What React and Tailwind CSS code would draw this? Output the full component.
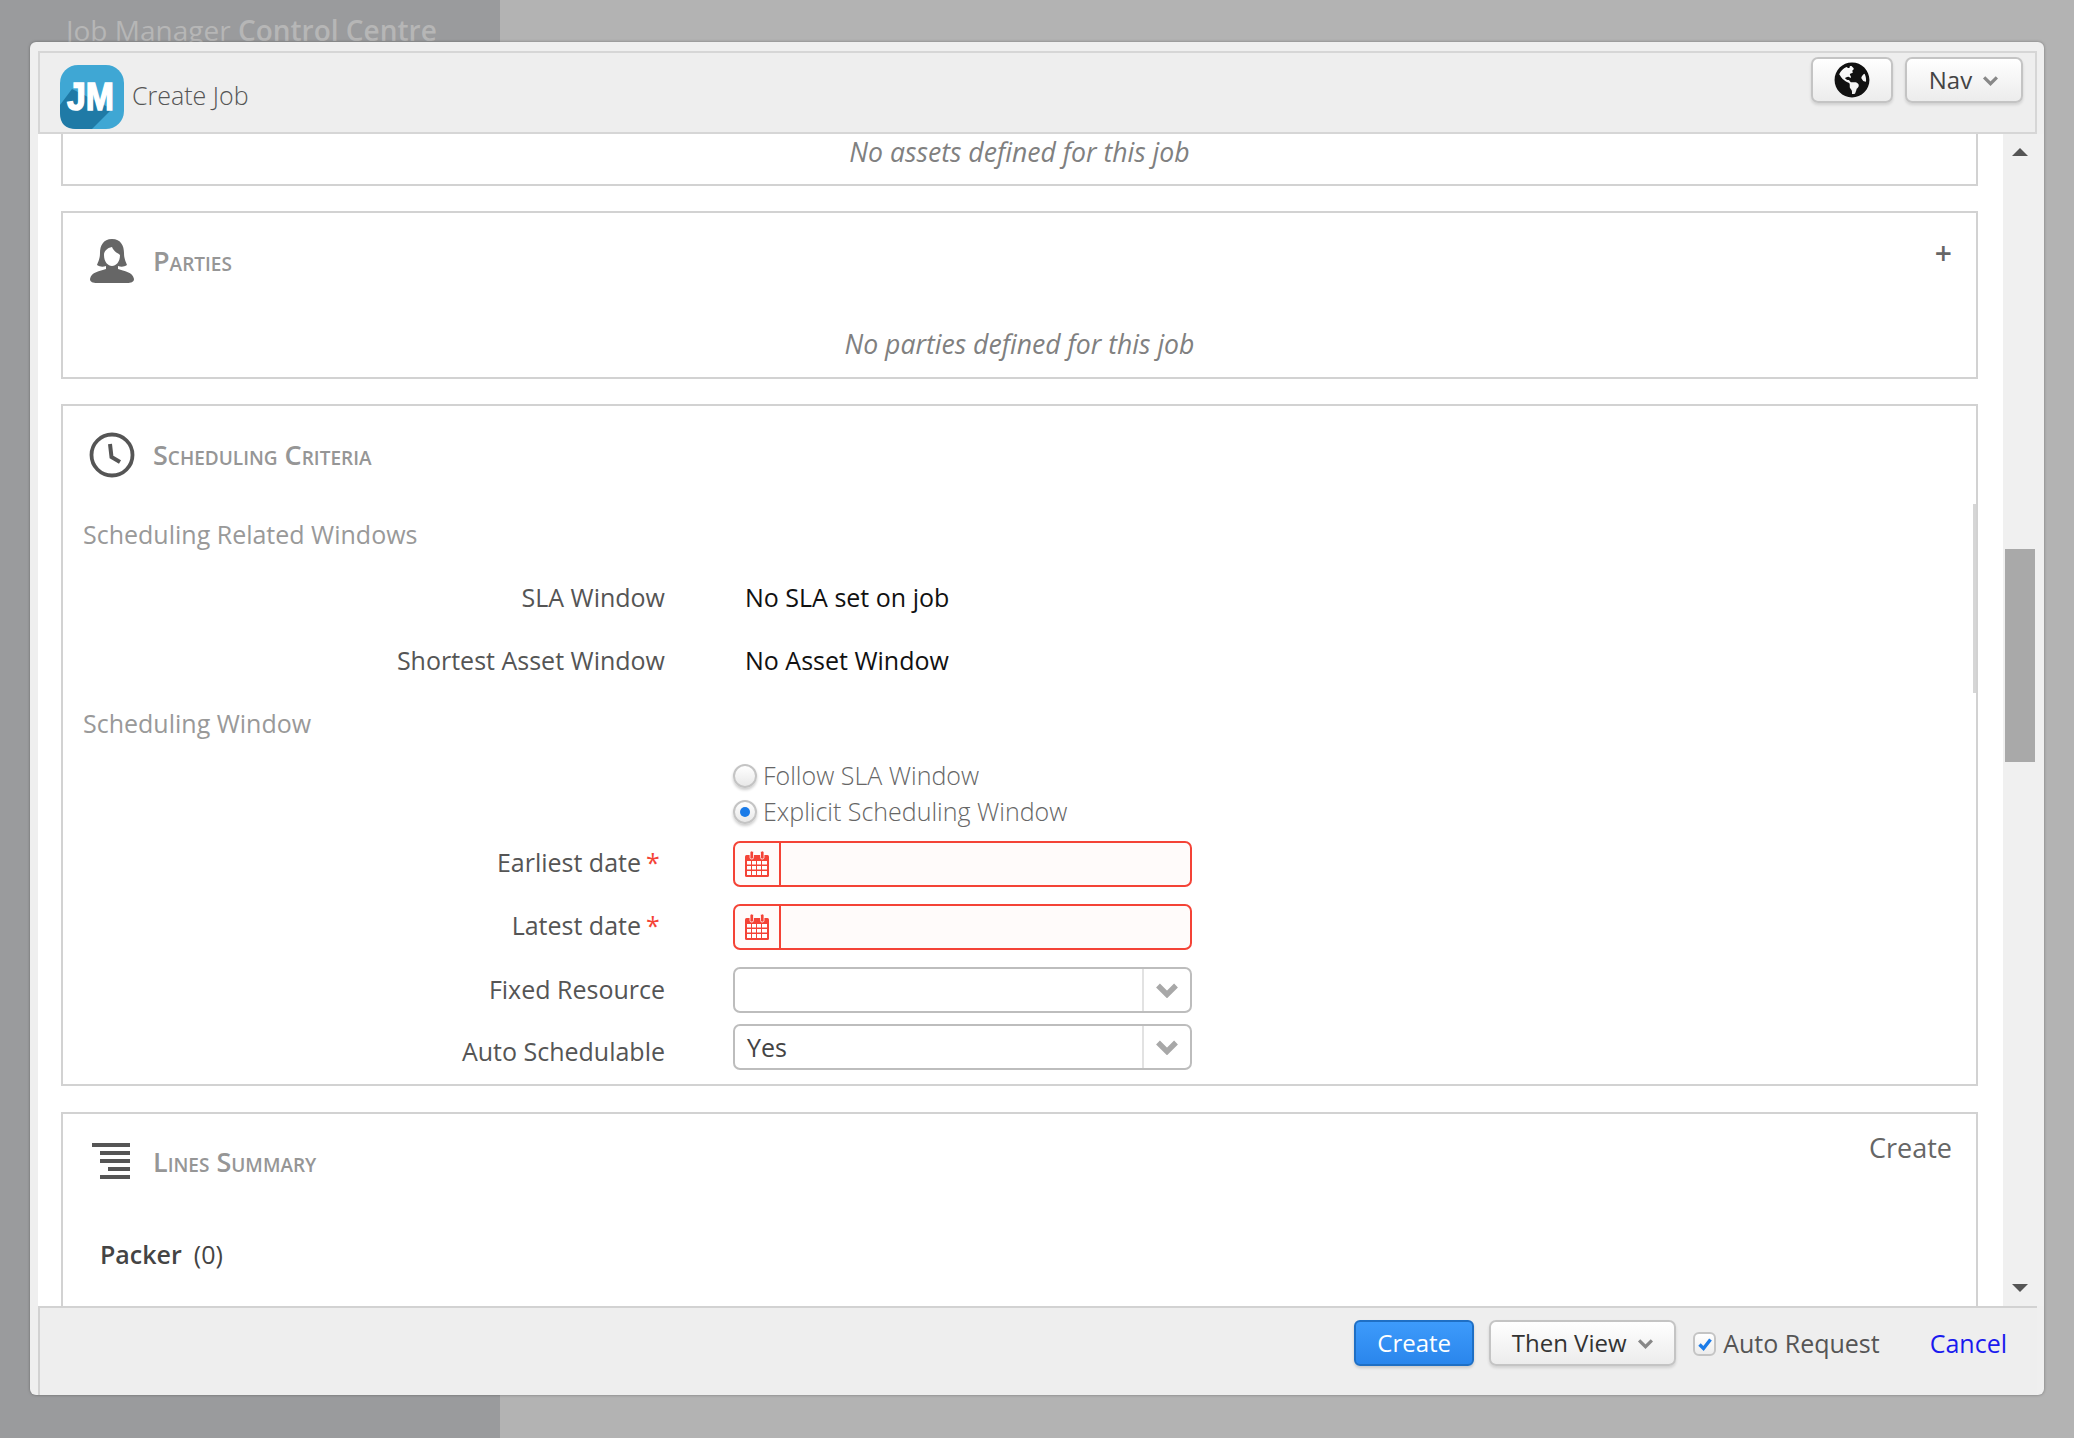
import { FaGlobeAmericas } from 'react-icons/fa';

function Chevron({ className = 'w-4 h-3', color = '#888', weight = 3 }) {
  return (
    <svg viewBox="0 0 16 10" className={className}>
      <path d="M2 2 L8 8 L14 2" fill="none" stroke={color} strokeWidth={weight} />
    </svg>
  );
}

function Logo() {
  return (
    <svg viewBox="0 0 64 64" className="w-[64px] h-[64px] shrink-0">
      <rect width="64" height="64" rx="18" fill="#3fa7d4" />
      <path d="M0 40 L12 24 L52 44 L32 64 L16 64 Q0 64 0 48 Z" fill="#1f7aa6" />
      <text x="7" y="45" textLength="47" lengthAdjust="spacingAndGlyphs" fontFamily="Liberation Sans, sans-serif" fontWeight="700" fontSize="39" stroke="#fff" strokeWidth="1.5" fill="#fff">JM</text>
    </svg>
  );
}

function PersonIcon() {
  return (
    <svg viewBox="0 0 46 46" className="w-[46px] h-[46px]">
      <path d="M23 1 C14 1 11 8 11 15 C11 21 9 24 8 27 C11 29 14 29 17 28 L17 31 C11 33 2 34 1 41 C1 44 4 45 8 45 L38 45 C42 45 45 44 45 41 C44 34 35 33 29 31 L29 28 C32 29 35 29 38 27 C37 24 35 21 35 15 C35 8 32 1 23 1 Z" fill="#666" />
      <path d="M23 9 C18 10 15 13 15 17 C15 24 19 28 23 28 C27 28 31 24 31 17 C29 15 25 14 23 9 Z" fill="#fff" />
    </svg>
  );
}

function ClockIcon() {
  return (
    <svg viewBox="0 0 46 46" className="w-[46px] h-[46px]">
      <circle cx="23" cy="23" r="20.5" fill="none" stroke="#555" strokeWidth="3.8" />
      <path d="M21 12 L22.5 25 L31 30" fill="none" stroke="#555" strokeWidth="4" />
    </svg>
  );
}

function LinesIcon() {
  return (
    <div className="w-[46px] flex flex-col items-end gap-[4px] pr-[5px] -mt-[2px]">
      <div className="w-[38px] h-[4px] bg-[#555]" />
      <div className="w-[30px] h-[4px] bg-[#555]" />
      <div className="w-[30px] h-[4px] bg-[#555]" />
      <div className="w-[22px] h-[4px] bg-[#555]" />
      <div className="w-[30px] h-[4px] bg-[#555]" />
    </div>
  );
}

function CalendarIcon() {
  return (
    <svg viewBox="0 0 24 26" className="w-[24px] h-[26px]">
      <rect x="0" y="4" width="24" height="22" rx="1.5" fill="#f44336" />
      <rect x="5" y="0" width="3.5" height="8" rx="1.5" fill="#f44336" stroke="#fff" strokeWidth="0.8" />
      <rect x="15.5" y="0" width="3.5" height="8" rx="1.5" fill="#f44336" stroke="#fff" strokeWidth="0.8" />
      <g fill="#fff">
        <rect x="2" y="10" width="4" height="3.5" />
        <rect x="7" y="10" width="4" height="3.5" />
        <rect x="12" y="10" width="4" height="3.5" />
        <rect x="17" y="10" width="5" height="3.5" />
        <rect x="2" y="15" width="4" height="3.5" />
        <rect x="7" y="15" width="4" height="3.5" />
        <rect x="12" y="15" width="4" height="3.5" />
        <rect x="17" y="15" width="5" height="3.5" />
        <rect x="2" y="20" width="4" height="4" />
        <rect x="7" y="20" width="4" height="4" />
        <rect x="12" y="20" width="4" height="4" />
        <rect x="17" y="20" width="5" height="4" />
      </g>
    </svg>
  );
}

function PanelHeading({ icon, title }) {
  return (
    <div className="h-[96px] flex items-center pl-[26px]">
      <div className="w-[46px] flex justify-center">{icon}</div>
      <div className="ml-[18px] text-[27px] font-semibold text-[#969696] [font-variant-caps:small-caps]">{title}</div>
    </div>
  );
}

function Label({ children, star, className = '' }) {
  return (
    <div className={`w-[602px] shrink-0 text-right text-[25px] text-[#555] ${className}`}>
      {children}
      {star && <span className="inline-block w-[18px] text-left pl-[5px] mr-[6px] text-[#f44336]">*</span>}
    </div>
  );
}

function DateRow({ label, className = '' }) {
  return (
    <div className={`flex items-center h-[46px] ${className}`}>
      <Label star className="-mt-[3px]">{label}</Label>
      <div className="ml-[68px] w-[459px] h-[46px] flex border-2 border-[#f44336] rounded-[7px] bg-[#fffbfa]">
        <div className="w-[46px] flex items-center justify-center border-r-2 border-[#f44336]">
          <CalendarIcon />
        </div>
      </div>
    </div>
  );
}

function SelectRow({ label, value, className = '', labelClass = '' }) {
  return (
    <div className={`flex items-center h-[46px] ${className}`}>
      <Label className={labelClass}>{label}</Label>
      <div className="ml-[68px] w-[459px] h-[46px] flex border-2 border-[#bdbdbd] rounded-[7px] bg-white">
        <div className="flex-1 pl-[12px] text-[25px] leading-[42px] text-[#444]">{value}</div>
        <div className="w-[48px] flex items-center justify-center border-l-2 border-[#e2e2e2]">
          <Chevron className="w-[24px] h-[16px]" color="#a8a8a8" weight={3.6} />
        </div>
      </div>
    </div>
  );
}

function Radio({ checked, label }) {
  return (
    <div className="h-[36px] flex items-center pl-[670px]">
      <div className="w-[24px] h-[24px] rounded-full border-2 border-[#c4c4c4] bg-gradient-to-b from-white to-[#e8e8e8] shadow-[0_2px_3px_rgba(0,0,0,0.2)] flex items-center justify-center">
        {checked && <div className="w-[10px] h-[10px] rounded-full bg-[#1a7be8]" />}
      </div>
      <span className="ml-[6px] text-[25px] font-light text-[#666]">{label}</span>
    </div>
  );
}

export default function App() {
  return (
    <div className="relative h-screen overflow-hidden flex bg-[#b3b3b3] [font-family:'Open_Sans',sans-serif]">
      <div className="w-[500px] bg-[#9a9b9d] pl-[66px] pt-[9px] text-[28px] text-[#b6b6b6]">
        Job Manager <span className="font-semibold">Control Centre</span>
      </div>

      <div className="absolute left-[30px] top-[42px] w-[2014px] h-[1353px] flex flex-col bg-[#efefef] rounded-[6px] pl-[8px] pt-[9px] shadow-[0_0_3px_rgba(0,0,0,0.35)]">
        {/* header */}
        <div className="h-[83px] mr-[7px] shrink-0 flex border-2 border-[#d6d6d6] bg-[#eeeeee] pl-[20px] pr-[12px]">
          <div className="flex items-center pt-[8px]">
            <Logo />
            <span className="ml-[8px] text-[25px] font-light text-[#555] -mt-[2px]">Create Job</span>
          </div>
          <div className="ml-auto flex gap-[12px] pt-[4px]">
            <div className="w-[82px] h-[46px] flex items-center justify-center border-2 border-[#c4c4c4] rounded-[7px] bg-gradient-to-b from-white to-[#ececec] shadow-[0_2px_3px_rgba(0,0,0,0.12)]">
              <FaGlobeAmericas className="w-[36px] h-[36px] text-[#111]" />
            </div>
            <div className="w-[118px] h-[46px] flex items-center justify-center gap-[10px] border-2 border-[#c4c4c4] rounded-[7px] bg-gradient-to-b from-white to-[#ececec] shadow-[0_2px_3px_rgba(0,0,0,0.12)] text-[24px] text-[#444]">
              Nav
              <Chevron className="w-[17px] h-[11px]" />
            </div>
          </div>
        </div>

        {/* body */}
        <div className="flex-1 min-h-0 flex">
          <div className="flex-1 bg-white overflow-hidden pl-[23px] pr-[25px]">
            <div className="h-[52px] border-2 border-t-0 border-[#d2d2d2] flex items-center justify-center pb-[12px] text-[26.6px] italic text-[#808080]">
              No assets defined for this job
            </div>

            <div className="mt-[25px] h-[168px] border-2 border-[#d2d2d2] relative">
              <PanelHeading icon={<PersonIcon />} title="Parties" />
              <div className="absolute right-[24px] top-[20px] text-[30px] leading-[40px] font-semibold text-[#666]">+</div>
              <div className="h-[67px] flex items-center justify-center pt-[5px] text-[26.6px] italic text-[#808080]">
                No parties defined for this job
              </div>
            </div>

            <div className="mt-[25px] h-[682px] pt-[1px] border-2 border-[#d2d2d2] relative">
              <PanelHeading icon={<ClockIcon />} title="Scheduling Criteria" />
              <div className="absolute right-0 top-[98px] w-[3px] h-[189px] bg-[#d6d6d6]" />
              <div className="h-[63px] flex items-center pl-[20px] text-[25px] text-[#999]">Scheduling Related Windows</div>
              <div className="h-[64px] flex items-center">
                <Label>SLA Window</Label>
                <div className="ml-[80px] text-[25px] text-[#111]">No SLA set on job</div>
              </div>
              <div className="h-[62px] flex items-center">
                <Label>Shortest Asset Window</Label>
                <div className="ml-[80px] text-[25px] text-[#111]">No Asset Window</div>
              </div>
              <div className="h-[62px] flex items-center pl-[20px] pt-[2px] text-[25px] text-[#999]">Scheduling Window</div>
              <div className="pt-[4px]">
                <Radio label="Follow SLA Window" />
                <Radio checked label="Explicit Scheduling Window" />
              </div>
              <DateRow label="Earliest date" className="mt-[11px]" />
              <DateRow label="Latest date" className="mt-[17px]" />
              <SelectRow label="Fixed Resource" className="mt-[17px]" />
              <SelectRow label="Auto Schedulable" value="Yes" className="mt-[11px]" labelClass="mt-[10px]" />
            </div>

            <div className="mt-[26px] h-[260px] border-2 border-[#d2d2d2] relative">
              <PanelHeading icon={<LinesIcon />} title="Lines Summary" />
              <div className="absolute right-[24px] top-[14px] text-[27px] text-[#666]">Create</div>
              <div className="pl-[37px] pt-[26px] text-[25px] text-[#444]">
                <span className="font-semibold">Packer</span>
                <span className="ml-[12px]">(0)</span>
              </div>
            </div>
          </div>

          {/* scrollbar */}
          <div className="w-[41px] shrink-0 pl-[2px] bg-[#f0f0f0] flex flex-col">
            <div className="w-[30px] flex justify-center pt-[14px]">
              <svg viewBox="0 0 16 8" className="w-[16px] h-[8px]"><polygon points="8,0 16,8 0,8" fill="#555" /></svg>
            </div>
            <div className="w-[30px] h-[213px] mt-[393px] bg-[#a9a9a9]" />
            <div className="w-[30px] flex justify-center mt-auto mb-[14px]">
              <svg viewBox="0 0 16 8" className="w-[16px] h-[8px]"><polygon points="0,0 16,0 8,8" fill="#555" /></svg>
            </div>
          </div>
        </div>

        {/* footer */}
        <div className="h-[89px] mr-[7px] shrink-0 flex justify-end items-start pt-[12px] pr-[30px] border-t-2 border-l-2 border-[#d2d2d2] bg-[#eeeeee]">
          <div className="w-[120px] h-[46px] flex items-center justify-center rounded-[6px] border-2 border-[#1f6fc4] bg-gradient-to-b from-[#3d9bfb] to-[#2a86ec] text-[24px] text-white shadow-[0_2px_3px_rgba(0,0,0,0.15)]">
            Create
          </div>
          <div className="ml-[15px] w-[187px] h-[46px] flex items-center justify-center gap-[10px] rounded-[7px] border-2 border-[#c4c4c4] bg-gradient-to-b from-white to-[#ececec] text-[24px] text-[#333] shadow-[0_2px_3px_rgba(0,0,0,0.12)]">
            Then View
            <Chevron className="w-[17px] h-[11px]" />
          </div>
          <div className="ml-[17px] mt-[12px] w-[23px] h-[24px] flex items-center justify-center rounded-[6px] border-2 border-[#c4c4c4] bg-gradient-to-b from-white to-[#ececec]">
            <svg viewBox="0 0 16 16" className="w-[16px] h-[16px]"><path d="M2.5 8.5 L6.5 12.5 L13.5 3.5" fill="none" stroke="#1a7be8" strokeWidth="3.4" /></svg>
          </div>
          <span className="ml-[7px] mt-[5px] text-[25px] text-[#555]">Auto Request</span>
          <span className="ml-[50px] mt-[5px] text-[25px] text-[#1a1aee]">Cancel</span>
        </div>
      </div>
    </div>
  );
}
